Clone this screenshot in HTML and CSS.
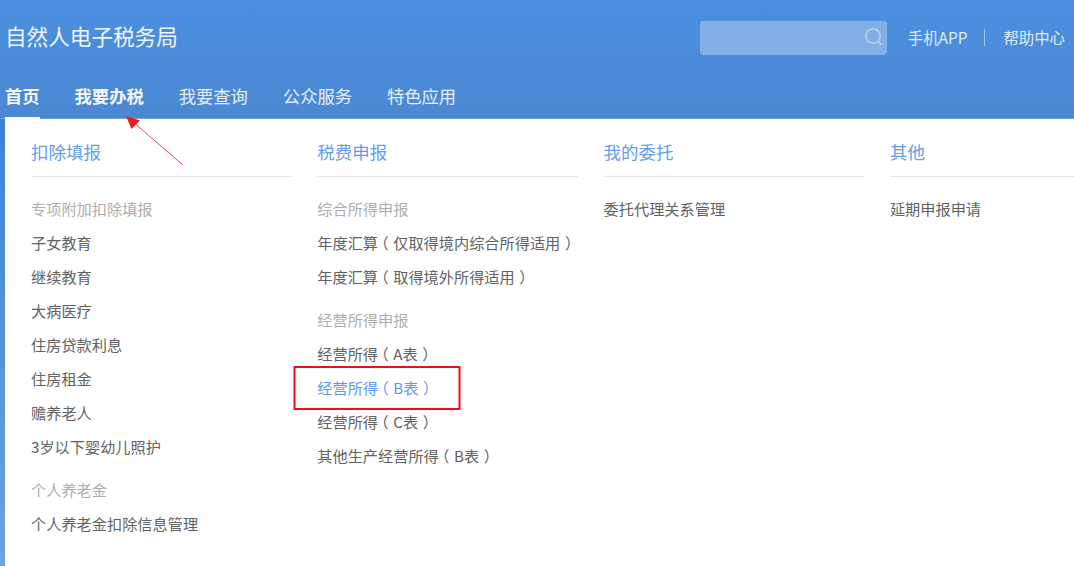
FILE: index.html
```html
<!DOCTYPE html>
<html lang="zh-CN">
<head>
<meta charset="utf-8">
<title>自然人电子税务局</title>
<link rel="stylesheet" href="styles.css">
</head>
<body>
<header class="header">
  <div class="top">
    <div class="title">自然人电子税务局</div>
    <div class="tools">
      <div class="search">
        <svg class="search-icon" width="20" height="20" viewBox="0 0 20 20" fill="none" stroke="#c9d6e6" stroke-width="1.3"><circle cx="9" cy="9" r="7.2"/><path d="M14 14.2l3.6 3.6"/></svg>
      </div>
      <a class="tool">手机APP</a>
      <span class="sep"></span>
      <a class="tool">帮助中心</a>
    </div>
  </div>
  <nav class="nav">
    <a class="nav-item current">首页</a>
    <a class="nav-item bold">我要办税</a>
    <a class="nav-item">我要查询</a>
    <a class="nav-item">公众服务</a>
    <a class="nav-item">特色应用</a>
  </nav>
</header>
<main class="main">
  <div class="strip"></div>
  <div class="menu">
    <section class="col">
      <h2 class="col-title">扣除填报</h2>
      <h3 class="label">专项附加扣除填报</h3>
      <a class="item">子女教育</a>
      <a class="item">继续教育</a>
      <a class="item">大病医疗</a>
      <a class="item">住房贷款利息</a>
      <a class="item">住房租金</a>
      <a class="item">赡养老人</a>
      <a class="item">3岁以下婴幼儿照护</a>
      <h3 class="label later">个人养老金</h3>
      <a class="item">个人养老金扣除信息管理</a>
    </section>
    <section class="col">
      <h2 class="col-title">税费申报</h2>
      <h3 class="label">综合所得申报</h3>
      <a class="item">年度汇算<span class="po">（</span>仅取得境内综合所得适用<span class="pc">）</span></a>
      <a class="item">年度汇算<span class="po">（</span>取得境外所得适用<span class="pc">）</span></a>
      <h3 class="label later">经营所得申报</h3>
      <a class="item">经营所得<span class="po">（</span>A表<span class="pc">）</span></a>
      <a class="item active">经营所得<span class="po">（</span>B表<span class="pc">）</span></a>
      <a class="item">经营所得<span class="po">（</span>C表<span class="pc">）</span></a>
      <a class="item">其他生产经营所得<span class="po">（</span>B表<span class="pc">）</span></a>
    </section>
    <section class="col">
      <h2 class="col-title">我的委托</h2>
      <a class="item first">委托代理关系管理</a>
    </section>
    <section class="col">
      <h2 class="col-title">其他</h2>
      <a class="item first">延期申报申请</a>
    </section>
  </div>
</main>
<svg class="annot" width="1074" height="566" viewBox="0 0 1074 566" fill="none">
  <path d="M183 165L133 122" stroke="#f0474a" stroke-width="1"/>
  <path d="M126 116L140 120.500L131.500 129Z" fill="#f01c1c"/>
  <rect x="294.500" y="367" width="165" height="42" stroke="#e8101a" stroke-width="2"/>
</svg>
</body>
</html>
```
FILE: styles.css
```css
* { box-sizing: border-box; }
html, body { margin: 0; padding: 0; }
body {
  width: 1074px;
  height: 566px;
  overflow: hidden;
  position: relative;
  background: #fff;
  font-family: "Noto Sans CJK SC", "Liberation Sans", sans-serif;
}
.header {
  height: 119px;
  background: linear-gradient(#4a90e0, #4a88d2);
  border-bottom: 1px solid #6fa3e0;
  color: #fff;
  padding-left: 5px;
  display: flex;
  flex-direction: column;
}
.top {
  height: 75px;
  display: flex;
  align-items: center;
  justify-content: space-between;
}
.title { font-size: 21.600px; color: #eef5fd; margin-bottom: 3px; }
.tools {
  display: flex;
  align-items: center;
  padding-right: 9px;
}
.search {
  width: 187px;
  height: 34px;
  border-radius: 3px;
  background: #82b0e6;
  display: flex;
  align-items: center;
  justify-content: flex-end;
  padding: 0 3px 2px 0;
  margin-right: 21px;
  margin-top: 1px;
}
.tool { font-size: 15.400px; color: #dfeafa; margin-bottom: 1px; }
.sep {
  width: 1px;
  height: 17px;
  background: #a5c5ec;
  margin: 0 18px 0 17px;
}
.nav { display: flex; gap: 35px; height: 44px; }
.nav-item {
  font-size: 17.300px;
  color: #e6effb;
  height: 44px;
  line-height: 44px;
  position: relative;
}
.nav-item.bold, .nav-item.current { font-weight: 700; color: #f4f8fe; }
.nav-item.current::after {
  content: "";
  position: absolute;
  left: 0;
  right: 0;
  bottom: -1px;
  height: 2px;
  background: #fff;
}
.main { display: flex; height: 447px; }
.strip {
  width: 5px;
  background: linear-gradient(#3f82d2, #6ea3dc);
  flex: none;
}
.menu {
  display: grid;
  grid-template-columns: repeat(3, 261px) 184px;
  column-gap: 25.300px;
  padding-left: 26px;
}
.col { display: flex; flex-direction: column; min-width: 0; }
.col-title {
  margin: 0 0 14px;
  height: 58px;
  line-height: 65px;
  font-size: 17.500px;
  font-weight: 400;
  color: #659cf0;
  border-bottom: 1px solid #e4e6e9;
}
.label {
  margin: 0;
  height: 34px;
  line-height: 34px;
  font-size: 15.200px;
  font-weight: 400;
  color: #adadad;
}
.label.later { margin-top: 9px; }
.item {
  display: block;
  height: 34px;
  line-height: 34px;
  font-size: 15.200px;
  color: #626262;
  white-space: nowrap;
}
.item.active { color: #5c98f0; }
.po, .pc { font-feature-settings: "halt"; }
.po { padding: 0 4.600px 0 3px; }
.pc { padding: 0 3px 0 4.600px; }
.annot { position: absolute; left: 0; top: 0; pointer-events: none; }
```
